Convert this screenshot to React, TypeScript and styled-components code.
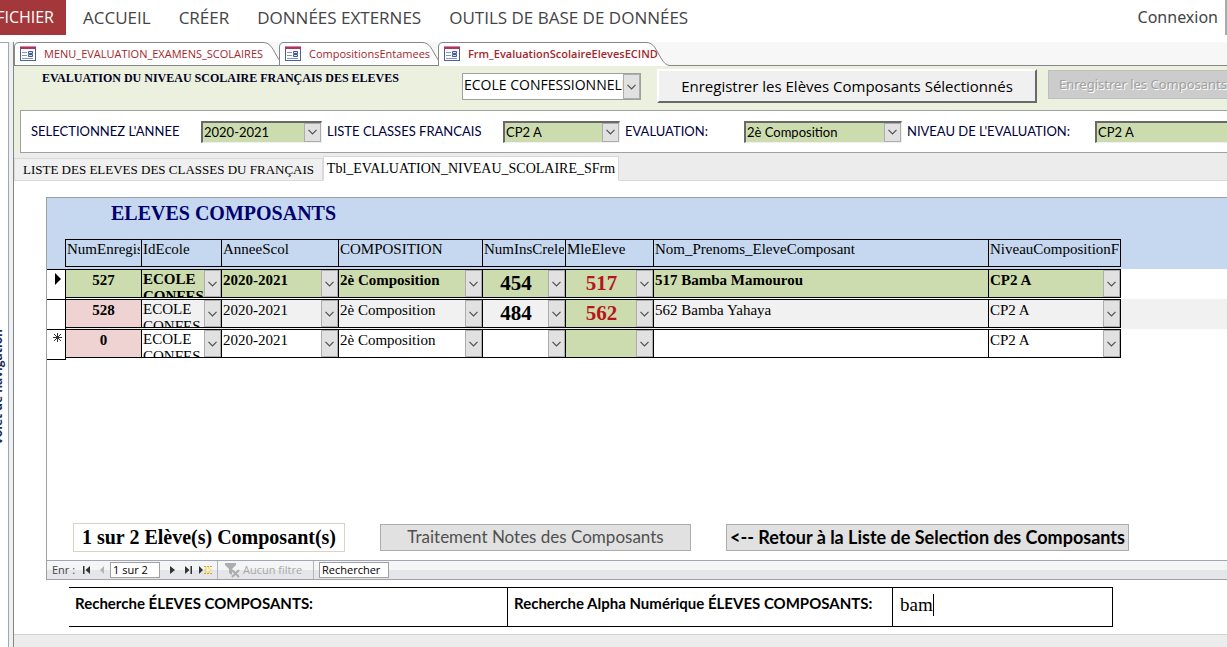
import React from "react";
import styled, { createGlobalStyle } from "styled-components";

const sans = '"Open Sans", "Noto Sans", sans-serif';
const wideSans = '"Noto Sans", "Open Sans", sans-serif';
const humanist = 'Lato, "Open Sans", sans-serif';
const serif = '"Liberation Serif", "Times New Roman", serif';

const GlobalStyle = createGlobalStyle`
  *, *::before, *::after { box-sizing: border-box; }
  body { margin: 0; background: #fff; color: #000; overflow: hidden; font-family: ${sans}; }
  button, input, select, textarea { font: inherit; color: inherit; margin: 0; border-radius: 0; outline: none; }
`;

const Page = styled.div`
  display: flex;
  flex-direction: column;
  min-height: 100vh;
  overflow: hidden;
`;

/* ---------- Ribbon ---------- */

const Ribbon = styled.header`
  display: flex;
  align-items: stretch;
  height: 35px;
  margin-bottom: 7px;
  overflow: hidden;
`;

const RibbonTab = styled.button`
  flex: none;
  border: 0;
  padding: 0 14px;
  background: none;
  color: #444;
  font-size: 17px;
  line-height: 35px;
  white-space: nowrap;
`;

const FileTab = styled(RibbonTab)`
  display: flex;
  justify-content: flex-end;
  width: 66px;
  padding: 0 12px 0 0;
  margin-right: 3px;
  background: #a4373a;
  color: #fff;
  font-size: 16px;
`;

const SignIn = styled.a`
  margin-left: auto;
  padding-right: 7px;
  border-right: 2px solid #ababab;
  color: #444;
  font-family: ${wideSans};
  font-size: 16px;
  line-height: 35px;
  text-decoration: none;
`;

/* ---------- Frame ---------- */

const Workspace = styled.div`
  display: flex;
  flex: 1;
`;

const NavigationPane = styled.aside`
  display: flex;
  align-items: center;
  justify-content: flex-end;
  width: 9px;
  flex: none;
  padding: 84px 2px 0 0;
  border: solid #a0a6b4;
  border-width: 1px 1px 0 0;
  overflow: hidden;
  color: #1f2d5a;
  font-size: 12px;
  font-weight: 700;
  line-height: 16px;
`;

const VerticalLabel = styled.span`
  writing-mode: vertical-rl;
  rotate: 180deg;
  white-space: nowrap;
`;

const Splitter = styled.div`
  flex: none;
  width: 5px;
  background: #eff0f2;
  border-right: 1px solid #868686;
`;

const Documents = styled.main`
  display: flex;
  flex-direction: column;
  flex: 1;
  min-width: 0;
`;

/* ---------- Document tabs ---------- */

const DocumentTabs = styled.nav`
  display: flex;
  height: 24px;
  background: #f7f7f7;
  box-shadow: inset 0 -1px 0 #868686;
`;

const DocumentTab = styled.button<{ $width: number; $active?: boolean }>`
  position: relative;
  flex: none;
  display: flex;
  align-items: center;
  width: ${(p) => p.$width}px;
  height: 24px;
  margin-right: -8px;
  padding: 0 0 0 6px;
  border: 0;
  background: none;
  color: #a4262c;
  font-family: ${sans};
  font-size: 11px;
  font-weight: ${(p) => (p.$active ? 600 : 400)};
  white-space: nowrap;
`;

const TabShape = styled.svg`
  position: absolute;
  inset: 0;
`;

const TabContent = styled.span`
  position: relative;
  display: flex;
  align-items: center;
  gap: 8px;
  padding-bottom: 2px;
`;

function FormIcon() {
  return (
    <svg width="16" height="15" viewBox="0 0 16 15" aria-hidden="true">
      <rect x="0.5" y="0.5" width="15" height="14" fill="#fff" stroke="#4a5f94" />
      <rect x="0" y="0" width="16" height="3" fill="#b5305a" />
      <rect x="0" y="0" width="16" height="1" fill="#d8899f" />
      <path d="M2 6.500h5M2 9.500h5M2 12.500h11" stroke="#8494bb" />
      <path d="M8.500 5.500h4v2h-4zM8.500 8.500h4v2h-4z" fill="#d7deee" stroke="#44598f" />
    </svg>
  );
}

function DocTab({ width, active, children }: { width: number; active?: boolean; children: string }) {
  const outline = `M0.500 24V5Q0.500 0.500 5 0.500H${width - 24}C${width - 16} 0.500 ${width - 14} 8 ${width - 9} 16Q${width - 5} 23.500 ${width} 23.500`;
  return (
    <DocumentTab $width={width} $active={active}>
      <TabShape width={width} height="24" aria-hidden="true">
        <path d={`${outline}V${active ? 24 : 23.5}H0.500Z`} fill="#fff" />
        <path d={outline} fill="none" stroke="#868686" />
        {!active && <path d={`M0 23.500H${width}`} stroke="#868686" />}
      </TabShape>
      <TabContent>
        <FormIcon />
        {children}
      </TabContent>
    </DocumentTab>
  );
}

/* ---------- Combo boxes ---------- */

const ComboFrame = styled.div<{ $width: number; $tone: "flat" | "sunken" }>`
  display: flex;
  flex: none;
  width: ${(p) => p.$width}px;
  height: ${(p) => (p.$tone === "flat" ? 27 : 22)}px;
  border: solid;
  border-width: ${(p) => (p.$tone === "flat" ? "1px" : "2px 1px 1px 2px")};
  border-color: ${(p) => (p.$tone === "flat" ? "#a0a0a0" : "#696969 #f0f0f0 #f0f0f0 #696969")};
  background: ${(p) => (p.$tone === "flat" ? "#fff" : "#ccdcae")};
`;

const Select = styled.select`
  flex: 1;
  min-width: 0;
  height: 100%;
  padding: 0 0 0 1px;
  border: 0;
  background: none;
  appearance: none;
  text-overflow: clip;
  overflow: hidden;
`;

const FormSelect = styled(Select)<{ $tone: "flat" | "sunken" }>`
  padding-bottom: ${(p) => (p.$tone === "flat" ? 4 : 2)}px;
`;

const DropButton = styled.span`
  flex: none;
  display: flex;
  align-items: center;
  justify-content: center;
  width: 17px;
  border: 1px solid #adadad;
  background: #e1e1e1;
`;

function Drop() {
  return (
    <DropButton aria-hidden="true">
      <svg width="9" height="6" viewBox="0 0 9 6">
        <path d="M0.500 0.800L4.500 4.800L8.500 0.800" fill="none" stroke="#505050" strokeWidth="1.200" />
      </svg>
    </DropButton>
  );
}

function Combo({ id, value, width, tone, label }: { id?: string; value: string; width: number; tone: "flat" | "sunken"; label?: string }) {
  return (
    <ComboFrame $width={width} $tone={tone}>
      <FormSelect id={id} aria-label={label} defaultValue={value} $tone={tone}>
        <option>{value}</option>
      </FormSelect>
      <Drop />
    </ComboFrame>
  );
}

/* ---------- Form header ---------- */

const FormHeader = styled.section`
  background: #ebf0df;
  overflow: hidden;
`;

const HeaderRow = styled.div`
  display: flex;
  align-items: flex-start;
  height: 44px;
  padding: 3px 0 0 28px;
  font-size: 14px;
`;

const FormTitle = styled.h1`
  flex: none;
  width: 420px;
  margin: 0;
  font: 700 12px/18px ${serif};
  color: #00001e;
`;

const HeaderCombo = styled.div`
  padding-top: 4px;
  margin-right: 16px;
`;

const RaisedButton = styled.button`
  flex: none;
  width: 380px;
  height: 34px;
  margin-right: 11px;
  border: 2px solid;
  border-color: #fff #696969 #696969 #fff;
  background: #f0f0f0;
  font-size: 15px;
  line-height: 24px;
  padding: 0;
`;

const DisabledButton = styled.button`
  flex: none;
  height: 29px;
  margin-top: 1px;
  padding: 0 10px 2px;
  border: 1px solid #bfbfbf;
  background: #ccc;
  font: 13px/20px ${wideSans};
  &:disabled { color: #a0a0a0; text-shadow: 1px 1px 0 #fff; }
`;

const Filters = styled.div`
  display: flex;
  align-items: center;
  height: 43px;
  margin-left: 6px;
  padding-left: 10px;
  border: 1px solid #a0a0a0;
  border-right: 0;
  background: #fff;
  font: 13px/18px ${humanist};
  overflow: hidden;
`;

const FilterLabel = styled.label<{ $width: number }>`
  flex: none;
  width: ${(p) => p.$width}px;
  padding-bottom: 2px;
  color: #00003c;
  white-space: nowrap;
`;

const FilterField = styled.div`
  display: flex;
  align-items: center;
  flex: none;
  margin-right: 5px;
`;

/* ---------- Page tabs ---------- */

const PageTabs = styled.div`
  display: flex;
  align-items: flex-end;
  height: 28px;
  padding-top: 3px;
  background: #ececec;
  box-shadow: inset 0 -1px 0 #d9d9d9;
`;

const PageTab = styled.button<{ $active?: boolean }>`
  flex: none;
  width: ${(p) => (p.$active ? 296 : 309)}px;
  height: ${(p) => (p.$active ? 25 : 23)}px;
  padding: 0;
  border: 1px solid #d9d9d9;
  border-bottom-color: ${(p) => (p.$active ? "#fff" : "#d9d9d9")};
  background: ${(p) => (p.$active ? "#fff" : "#f0f0f0")};
  font: ${(p) => (p.$active ? 14 : 13)}px/20px ${serif};
  white-space: nowrap;
`;

/* ---------- Sub-form ---------- */

const PageBody = styled.div`
  padding: 16px 0 7px;
`;

const SubForm = styled.section`
  display: flex;
  flex-direction: column;
  min-height: 383px;
  margin-left: 32px;
  border: 1px solid #a0a0a0;
  border-right: 0;
  font-family: ${serif};
  overflow: hidden;
`;

const SubTitle = styled.h2`
  margin: 0;
  height: 41px;
  padding: 3px 0 0 64px;
  background: #c6d8ef;
  color: #00006e;
  font-size: 20px;
  line-height: 24px;
`;

const Grid = styled.table`
  width: 100%;
  border-spacing: 0;
  table-layout: fixed;
  font-size: 15px;
  line-height: 17px;
`;

const Th = styled.th`
  height: 30px;
  padding: 0;
  background: #c6d8ef;
  font-weight: 400;
  text-align: left;
  vertical-align: top;
`;

const HeadBox = styled.div<{ $last?: boolean }>`
  height: 28px;
  padding: 1px 1px 0 1px;
  border: solid #000;
  border-width: 1px ${(p) => (p.$last ? 1 : 0)}px 1px 1px;
`;

const HeadText = styled.div`
  overflow: hidden;
  white-space: nowrap;
`;

type Tone = "current" | "alternate" | "blank";
const rowColor: Record<Tone, string> = { current: "#fff", alternate: "#f1f1f1", blank: "#fff" };

const Tr = styled.tr<{ $tone: Tone }>`
  background: ${(p) => rowColor[p.$tone]};
  font-weight: ${(p) => (p.$tone === "current" ? 700 : 400)};
`;

const Td = styled.td`
  height: 30px;
  padding: 0;
  vertical-align: top;
`;

const Selector = styled.div<{ $last: boolean }>`
  display: flex;
  justify-content: center;
  height: ${(p) => (p.$last ? 31 : 30)}px;
  padding: 3px 0 0 3px;
  margin-bottom: ${(p) => (p.$last ? -1 : 0)}px;
  margin-right: -1px;
  border: solid #000;
  border-width: 1px 1px ${(p) => (p.$last ? 1 : 0)}px 0;
  background: #fff;
`;

const Box = styled.div<{ $bg?: string; $last?: boolean }>`
  display: flex;
  height: 29px;
  border: solid #000;
  border-width: 1px ${(p) => (p.$last ? 1 : 0)}px 1px 1px;
  background: ${(p) => p.$bg ?? "transparent"};
  overflow: hidden;
`;

const TextBox = styled.input<{ $center?: boolean }>`
  width: 100%;
  height: 21px;
  padding: 0 1px;
  border: 0;
  background: none;
  text-align: ${(p) => (p.$center ? "center" : "left")};
  font-weight: ${(p) => (p.$center ? 700 : "inherit")};
`;

const CellSelect = styled(Select)<{ $number?: string }>`
  height: ${(p) => (p.$number ? 27 : 20)}px;
  text-align: ${(p) => (p.$number ? "center" : "left")};
  font-size: ${(p) => (p.$number ? 21 : 15)}px;
  font-weight: ${(p) => (p.$number ? 700 : "inherit")};
  color: ${(p) => p.$number ?? "#000"};
`;

const WrappedText = styled.textarea`
  flex: 1;
  min-width: 0;
  height: 27px;
  padding: 1px 0 0 1px;
  border: 0;
  background: none;
  resize: none;
  overflow: hidden;
  line-height: 17px;
`;

const columns = [
  { name: "NumEnregis", width: 76 },
  { name: "IdEcole", width: 80 },
  { name: "AnneeScol", width: 117 },
  { name: "COMPOSITION", width: 144 },
  { name: "NumInsCreleve", width: 83 },
  { name: "MleEleve", width: 88 },
  { name: "Nom_Prenoms_EleveComposant", width: 335 },
  { name: "NiveauCompositionFrançais", width: 133 },
];

const records: { tone: Tone; num: string; ins: string; mle: string; name: string }[] = [
  { tone: "current", num: "527", ins: "454", mle: "517", name: "517 Bamba Mamourou" },
  { tone: "alternate", num: "528", ins: "484", mle: "562", name: "562 Bamba Yahaya" },
  { tone: "blank", num: "0", ins: "", mle: "", name: "" },
];

function CellCombo({ label, value, number }: { label: string; value: string; number?: string }) {
  return (
    <>
      <CellSelect aria-label={label} defaultValue={value} $number={number}>
        <option>{value}</option>
      </CellSelect>
      <Drop />
    </>
  );
}

function RecordMark({ tone }: { tone: Tone }) {
  if (tone === "current")
    return (
      <svg width="6" height="12" viewBox="0 0 6 12" aria-label="Enregistrement actif">
        <path d="M0 0L6 6L0 12Z" />
      </svg>
    );
  if (tone === "blank")
    return (
      <svg width="9" height="9" viewBox="0 0 9 9" aria-label="Nouvel enregistrement">
        <path d="M4.500 0V9M0 4.500H9M1 1L8 8M8 1L1 8" stroke="#333" fill="none" />
      </svg>
    );
  return null;
}

function Record({ tone, num, ins, mle, name }: (typeof records)[number]) {
  const green = "#ccdcae";
  const bg = tone === "current" ? green : undefined;
  return (
    <Tr $tone={tone}>
      <Td><Selector $last={tone === "blank"}><RecordMark tone={tone} /></Selector></Td>
      <Td><Box $bg={bg ?? "#efd2d2"}><TextBox $center aria-label="NumEnregis" defaultValue={num} /></Box></Td>
      <Td><Box $bg={bg}><WrappedText aria-label="IdEcole" defaultValue="ECOLE CONFESSIONNELLE" /><Drop /></Box></Td>
      <Td><Box $bg={bg}><CellCombo label="AnneeScol" value="2020-2021" /></Box></Td>
      <Td><Box $bg={bg}><CellCombo label="COMPOSITION" value="2è Composition" /></Box></Td>
      <Td><Box $bg={bg}><CellCombo label="NumInsCreleve" value={ins} number="#000" /></Box></Td>
      <Td><Box $bg={green}><CellCombo label="MleEleve" value={mle} number="#ba141a" /></Box></Td>
      <Td><Box $bg={bg}><TextBox aria-label="Nom et prénoms" defaultValue={name} /></Box></Td>
      <Td><Box $bg={bg} $last><CellCombo label="Niveau" value="CP2 A" /></Box></Td>
      <Td />
    </Tr>
  );
}

const Actions = styled.div`
  display: flex;
  align-items: center;
  gap: 35px;
  margin-top: auto;
  padding: 0 0 8px 26px;
`;

const Count = styled.output`
  flex: none;
  width: 272px;
  height: 29px;
  border: 1px solid #d8d4bf;
  text-align: center;
  font-weight: 700;
  font-size: 20px;
  line-height: 26px;
`;

const FlatButton = styled.button<{ $strong?: boolean }>`
  flex: none;
  width: ${(p) => (p.$strong ? 403 : 311)}px;
  height: 27px;
  padding: 0 0 2px;
  border: 1px solid #adadad;
  background: #e1e1e1;
  color: ${(p) => (p.$strong ? "#000" : "#505050")};
  font: ${(p) => (p.$strong ? "700 18px" : "400 17px")}/24px ${humanist};
  white-space: nowrap;
`;

/* ---------- Record navigation ---------- */

const RecordBar = styled.div`
  display: flex;
  align-items: center;
  height: 19px;
  padding-left: 5px;
  border-top: 1px solid #a0a6b4;
  background: linear-gradient(#f4f5f7 50%, #e4e6ea 50%);
  color: #444;
  font: 11px/16px ${sans};
`;

const RecordLabel = styled.label`
  width: 26px;
  white-space: nowrap;
`;

const StepButton = styled.button<{ $wide?: boolean }>`
  display: flex;
  align-items: center;
  justify-content: center;
  width: ${(p) => (p.$wide ? 17 : 16)}px;
  height: 16px;
  padding: 0;
  border: 0;
  background: none;
`;

const BarInput = styled.input<{ $width: number }>`
  width: ${(p) => p.$width}px;
  height: 16px;
  padding: 0 2px;
  border: 1px solid #a0a0a0;
  background: #fff;
  color: #000;
`;

const BarGroup = styled.div`
  display: flex;
  align-items: center;
  height: 18px;
`;

const FilterStatus = styled.button`
  display: flex;
  align-items: center;
  gap: 3px;
  width: 97px;
  height: 18px;
  margin: 0 5px 0 3px;
  padding: 0 0 0 7px;
  border: solid #b4b4b4;
  border-width: 0 1px;
  background: none;
  white-space: nowrap;
  &:disabled { color: #a8a8a8; }
`;

const Steps = styled(BarGroup)`
  padding-left: 4px;
`;

/* ---------- Search ---------- */

const SearchRow = styled.div`
  display: flex;
  width: 1044px;
  height: 40px;
  margin: 7px 0 0 55px;
  border: solid #000;
  border-width: 1px 1px 1px 0;
  font: 700 15px/18px ${humanist};
`;

const SearchCell = styled.div<{ $width: number }>`
  flex: none;
  width: ${(p) => p.$width}px;
  padding: 6px 6px;
  border-right: 1px solid #000;
`;

const SearchBox = styled.div`
  display: flex;
  align-items: center;
  flex: 1;
  padding: 0 0 4px 7px;
  font: 19px/22px ${serif};
`;

const SearchInput = styled.input`
  field-sizing: content;
  padding: 0;
  border: 0;
  background: none;
`;

const Caret = styled.span`
  width: 1px;
  height: 22px;
  background: #000;
`;

const StatusStrip = styled.footer`
  flex: 1;
  min-height: 13px;
  border-top: 1px solid #d4d4d4;
  background: #ececec;
`;

export default function App() {
  return (
    <Page>
      <GlobalStyle />
      <Ribbon>
        <FileTab>FICHIER</FileTab>
        <RibbonTab>ACCUEIL</RibbonTab>
        <RibbonTab>CRÉER</RibbonTab>
        <RibbonTab>DONNÉES EXTERNES</RibbonTab>
        <RibbonTab>OUTILS DE BASE DE DONNÉES</RibbonTab>
        <SignIn href="#connexion">Connexion</SignIn>
      </Ribbon>

      <Workspace>
        <NavigationPane>
          <VerticalLabel>Volet de navigation</VerticalLabel>
        </NavigationPane>
        <Splitter />
        <Documents>
          <DocumentTabs>
            <DocTab width={273}>MENU_EVALUATION_EXAMENS_SCOLAIRES</DocTab>
            <DocTab width={167}>CompositionsEntamees</DocTab>
            <DocTab width={232} active>Frm_EvaluationScolaireElevesECIND</DocTab>
          </DocumentTabs>

          <FormHeader>
            <HeaderRow>
              <FormTitle>EVALUATION DU NIVEAU SCOLAIRE FRANÇAIS DES ELEVES</FormTitle>
              <HeaderCombo>
                <Combo value="ECOLE CONFESSIONNELLE" width={179} tone="flat" label="Ecole" />
              </HeaderCombo>
              <RaisedButton>Enregistrer les Elèves Composants Sélectionnés</RaisedButton>
              <DisabledButton disabled>Enregistrer les Composants Sélectionnés</DisabledButton>
            </HeaderRow>
            <Filters>
              <FilterField>
                <FilterLabel $width={170} htmlFor="annee">SELECTIONNEZ L'ANNEE</FilterLabel>
                <Combo id="annee" value="2020-2021" width={121} tone="sunken" />
              </FilterField>
              <FilterField>
                <FilterLabel $width={176} htmlFor="classe">LISTE CLASSES FRANCAIS</FilterLabel>
                <Combo id="classe" value="CP2 A" width={117} tone="sunken" />
              </FilterField>
              <FilterField>
                <FilterLabel $width={119} htmlFor="evaluation">EVALUATION:</FilterLabel>
                <Combo id="evaluation" value="2è Composition" width={158} tone="sunken" />
              </FilterField>
              <FilterField>
                <FilterLabel $width={188} htmlFor="niveau">NIVEAU DE L'EVALUATION:</FilterLabel>
                <Combo id="niveau" value="CP2 A" width={160} tone="sunken" />
              </FilterField>
            </Filters>
          </FormHeader>

          <PageTabs>
            <PageTab>LISTE DES ELEVES DES CLASSES DU FRANÇAIS</PageTab>
            <PageTab $active>Tbl_EVALUATION_NIVEAU_SCOLAIRE_SFrm</PageTab>
          </PageTabs>

          <PageBody>
            <SubForm>
              <SubTitle>ELEVES COMPOSANTS</SubTitle>
              <Grid>
                <colgroup>
                  <col width={18} />
                  {columns.map((c) => <col key={c.name} width={c.width} />)}
                  <col />
                </colgroup>
                <thead>
                  <tr>
                    <Th />
                    {columns.map((c, i) => (
                      <Th key={c.name} scope="col">
                        <HeadBox $last={i === columns.length - 1}>
                          <HeadText>{c.name}</HeadText>
                        </HeadBox>
                      </Th>
                    ))}
                    <Th />
                  </tr>
                </thead>
                <tbody>
                  {records.map((r) => <Record key={r.num} {...r} />)}
                </tbody>
              </Grid>

              <Actions>
                <Count>1 sur 2 Elève(s) Composant(s)</Count>
                <FlatButton>Traitement Notes des Composants</FlatButton>
                <FlatButton $strong>&lt;-- Retour à la Liste de Selection des Composants</FlatButton>
              </Actions>

              <RecordBar>
                <RecordLabel htmlFor="position">Enr :</RecordLabel>
                <BarGroup>
                  <StepButton aria-label="Premier">
                    <svg width="7" height="8" viewBox="0 0 7 8"><path d="M0 0H1.500V8H0ZM7 0V8L2.500 4Z" fill="#333" /></svg>
                  </StepButton>
                  <StepButton aria-label="Précédent">
                    <svg width="4" height="8" viewBox="0 0 4 8"><path d="M4 0V8L0 4Z" fill="#b4b4b4" /></svg>
                  </StepButton>
                </BarGroup>
                <BarInput id="position" $width={50} defaultValue="1 sur 2" />
                <Steps>
                  <StepButton aria-label="Suivant">
                    <svg width="5" height="8" viewBox="0 0 5 8"><path d="M0 0V8L5 4Z" fill="#333" /></svg>
                  </StepButton>
                  <StepButton $wide aria-label="Dernier">
                    <svg width="7" height="8" viewBox="0 0 7 8"><path d="M5.500 0H7V8H5.500ZM0 0V8L4.500 4Z" fill="#333" /></svg>
                  </StepButton>
                  <StepButton $wide aria-label="Nouvel enregistrement">
                    <svg width="13" height="8" viewBox="0 0 13 8">
                      <path d="M0 0V8L4 4Z" fill="#333" />
                      <path d="M5 0.500h8M5 7.500h8M5.500 4h7" stroke="#e0a800" strokeDasharray="2 1" />
                      <path d="M6 2h6M6 6h6" stroke="#edc74c" strokeDasharray="2 1" />
                      <rect x="7" y="3" width="4" height="2" fill="#fff2a8" />
                    </svg>
                  </StepButton>
                </Steps>
                <FilterStatus disabled>
                  <svg width="15" height="15" viewBox="0 0 15 15" aria-hidden="true">
                    <path d="M0 0H11V2L7 6V12L4 10V6L0 2Z" fill="#adadad" />
                    <path d="M7 7L14 14M14 7L7 14" stroke="#adadad" strokeWidth="2" />
                  </svg>
                  Aucun filtre
                </FilterStatus>
                <BarInput aria-label="Rechercher" $width={70} defaultValue="Rechercher" />
              </RecordBar>
            </SubForm>

            <SearchRow>
              <SearchCell $width={439}>Recherche ÉLEVES COMPOSANTS:</SearchCell>
              <SearchCell $width={385}>
                <label htmlFor="recherche">Recherche Alpha Numérique ÉLEVES COMPOSANTS:</label>
              </SearchCell>
              <SearchBox>
                <SearchInput id="recherche" defaultValue="bam" />
                <Caret />
              </SearchBox>
            </SearchRow>
          </PageBody>
          <StatusStrip />
        </Documents>
      </Workspace>
    </Page>
  );
}
